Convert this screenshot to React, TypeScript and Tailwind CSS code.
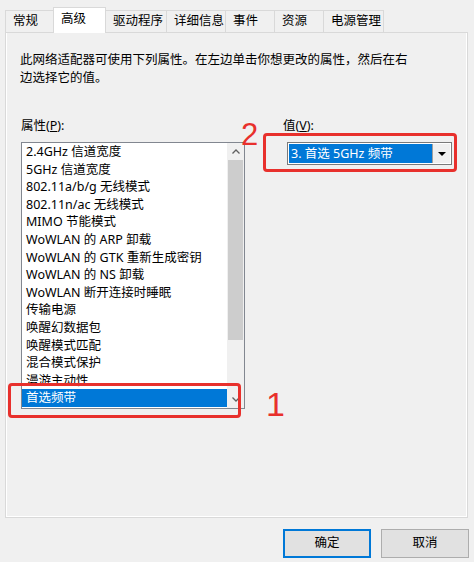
import React from 'react';

const tabs = [
  { t: '常规', cls: 'w-[49px] h-[22px] bg-[#f0f0f0] pt-0' },
  { t: '高级', cls: 'w-[53px] h-[26px] bg-white -mb-px relative z-10 pt-[1px]' },
  { t: '驱动程序', cls: 'w-[62px] h-[22px] bg-[#f0f0f0] pt-0' },
  { t: '详细信息', cls: 'w-[60px] h-[22px] bg-[#f0f0f0] pt-0' },
  { t: '事件', cls: 'w-[50px] h-[22px] bg-[#f0f0f0] pt-0' },
  { t: '资源', cls: 'w-[50px] h-[22px] bg-[#f0f0f0] pt-0' },
  { t: '电源管理', cls: 'w-[61px] h-[22px] bg-[#f0f0f0] pt-0' },
];

const items = [
  '2.4GHz 信道宽度',
  '5GHz 信道宽度',
  '802.11a/b/g 无线模式',
  '802.11n/ac 无线模式',
  'MIMO 节能模式',
  'WoWLAN 的 ARP 卸载',
  'WoWLAN 的 GTK 重新生成密钥',
  'WoWLAN 的 NS 卸载',
  'WoWLAN 断开连接时睡眠',
  '传输电源',
  '唤醒幻数据包',
  '唤醒模式匹配',
  '混合模式保护',
  '漫游主动性',
  '首选频带',
];

export default function App() {
  return (
    <div className="relative w-[474px] h-[562px] overflow-hidden bg-[#f0f0f0] text-black text-[12.5px] font-['Noto_Sans','Noto_Sans_CJK_SC',sans-serif] flex flex-col">
      {/* Tabs */}
      <div className="flex items-end h-[32px] pl-[5px]">
        {tabs.map((tab, i) => (
          <div
            key={tab.t}
            className={`${tab.cls} ${i > 0 ? '-ml-px' : ''} border border-b-0 border-[#d9d9d9] pl-[7px] leading-[20px] whitespace-nowrap`}
          >
            {tab.t}
          </div>
        ))}
      </div>

      {/* Panel */}
      <div className="ml-[5px] w-[463px] h-[486px] border border-[#d9d9d9] bg-[#f0f0f0]">
        <div className="h-full border-l border-r border-b border-white pl-[13px] pt-[18px]">
          <div className="leading-[18px]">
            <div>此网络适配器可使用下列属性。在左边单击你想更改的属性，然后在右</div>
            <div>边选择它的值。</div>
          </div>

          <div className="flex mt-[30px]">
            {/* Left column */}
            <div className="ml-[1px] w-[224px] flex flex-col">
              <div className="h-[17px] leading-[17px] mb-[8px]">
                属性(<span className="underline">P</span>):
              </div>
              <div className="w-[224px] h-[267px] border border-[#828790] bg-white flex">
                <div className="w-[205px] flex flex-col">
                  {items.map((it, i) => (
                    <div
                      key={it}
                      className={`h-[17.6px] leading-[17.6px] pl-[4px] whitespace-nowrap ${
                        i === items.length - 1 ? 'bg-[#0078d7] text-white' : ''
                      }`}
                    >
                      {it}
                    </div>
                  ))}
                </div>
                <div className="w-[17px] bg-[#f0f0f0] flex flex-col">
                  <div className="h-[17px] flex items-center justify-center">
                    <svg width="8" height="5" viewBox="0 0 8 5">
                      <polyline points="0.5,4.5 4,1 7.5,4.5" fill="none" stroke="#606060" strokeWidth="1.3" />
                    </svg>
                  </div>
                  <div className="flex-1 flex flex-col">
                    <div className="mx-[1px] h-[180px] bg-[#cdcdcd]" />
                  </div>
                  <div className="h-[17px] flex items-center justify-center">
                    <svg width="8" height="5" viewBox="0 0 8 5">
                      <polyline points="0.5,0.5 4,4 7.5,0.5" fill="none" stroke="#606060" strokeWidth="1.3" />
                    </svg>
                  </div>
                </div>
              </div>
            </div>

            {/* Right column */}
            <div className="ml-[38px] flex flex-col">
              <div className="h-[17px] leading-[17px] mb-[8px]">
                值(<span className="underline">V</span>):
              </div>
              <div className="ml-[4px] w-[165px] h-[23px] border border-[#7a7a7a] bg-white flex p-[1px]">
                <div className="flex-1 bg-[#0078d7] text-white leading-[19px] pl-[2px] whitespace-nowrap">
                  3. 首选 5GHz 频带
                </div>
                <div className="w-[18px] bg-[#f0f0f0] border-l border-[#a0a0a0] flex items-center justify-center">
                  <svg width="8" height="4" viewBox="0 0 8 4">
                    <polygon points="0,0 8,0 4,4" fill="#000" />
                  </svg>
                </div>
              </div>
            </div>
          </div>
        </div>
      </div>

      {/* Buttons */}
      <div className="flex justify-end gap-[10px] pr-[5px] mt-[11px]">
        <div className="w-[88px] h-[29px] border-2 border-[#0078d7] bg-[#e1e1e1] flex items-center justify-center">
          确定
        </div>
        <div className="w-[88px] h-[29px] border border-[#adadad] bg-[#e1e1e1] flex items-center justify-center">
          取消
        </div>
      </div>

      {/* Annotations */}
      <div className="absolute left-[263px] top-[133px] w-[194px] h-[39px] border-[3px] border-[#e8302c] rounded-[4px]" />
      <div className="absolute left-[241px] top-[119px] text-[31px] leading-none text-[#e8302c] font-['Liberation_Sans',sans-serif]">
        2
      </div>
      <div className="absolute left-[8px] top-[383px] w-[233px] h-[35px] border-[3px] border-[#e8302c] rounded-[4px]" />
      <div className="absolute left-[266px] top-[387px] text-[34px] leading-none text-[#e8302c] font-['Liberation_Sans',sans-serif]">
        1
      </div>
    </div>
  );
}
